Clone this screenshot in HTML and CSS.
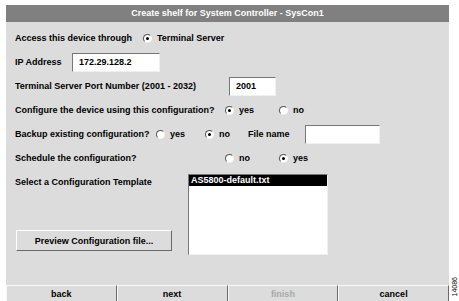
FILE: index.html
```html
<!DOCTYPE html>
<html>
<head>
  <title>Create shelf</title>
  <link rel="stylesheet" href="styles.css">
</head>
<body>
  <div class="page">
    <div class="panel">
      <div class="title">Create shelf for System Controller - SysCon1</div>

      <div class="form">
        <div class="row">
          <span class="label w-access">Access this device through</span>
          <span class="opt"><span class="radio on"></span>Terminal Server</span>
        </div>

        <div class="row">
          <span class="label w-ip">IP Address</span>
          <span class="field w-ipbox">172.29.128.2</span>
        </div>

        <div class="row">
          <span class="label w-port">Terminal Server Port Number (2001 - 2032)</span>
          <span class="field w-portbox">2001</span>
        </div>

        <div class="row">
          <span class="label w-long">Configure the device using this configuration?</span>
          <span class="opt w-yes"><span class="radio on"></span>yes</span>
          <span class="opt"><span class="radio"></span>no</span>
        </div>

        <div class="row">
          <span class="label w-backup">Backup existing configuration?</span>
          <span class="opt w-byes"><span class="radio"></span>yes</span>
          <span class="opt w-bno"><span class="radio on"></span>no</span>
          <span class="label w-fname">File name</span>
          <span class="field w-fbox"></span>
        </div>

        <div class="row">
          <span class="label w-long">Schedule the configuration?</span>
          <span class="opt w-yes"><span class="radio"></span>no</span>
          <span class="opt"><span class="radio on"></span>yes</span>
        </div>

        <div class="template">
          <div class="template-left">
            <span class="label">Select a Configuration Template</span>
            <button class="preview">Preview Configuration file...</button>
          </div>
          <div class="listbox">
            <div class="item selected">AS5800-default.txt</div>
          </div>
        </div>
      </div>

      <div class="footer">
        <button class="nav">back</button>
        <button class="nav">next</button>
        <button class="nav disabled">finish</button>
        <button class="nav">cancel</button>
      </div>
    </div>
    <div class="side">
      <span class="figno">14086</span>
    </div>
  </div>
</body>
</html>
```

FILE: styles.css
```css
/* page frame */
html, body {
  margin: 0;
  padding: 0;
  background-color: #fff;
  overflow: hidden;
}

.page {
  display: flex;
  height: 301px;
  padding: 5px 0 0 6px;
  box-sizing: border-box;
  font-family: "Liberation Sans", Arial, sans-serif;
  font-weight: bold;
  font-size: 9px;
  color: #000;
}

.panel {
  width: 443px;
  display: flex;
  flex-direction: column;
  background-color: #dcdcdc;
}

.title {
  height: 17px;
  line-height: 17px;
  background-color: #808080;
  color: #fff;
  font-size: 9px;
  text-align: center;
}

/* form rows */
.form {
  padding: 4px 0 0 9px;
}

.row {
  display: flex;
  align-items: center;
  height: 24px;
}

.label {
  flex-shrink: 0;
  white-space: nowrap;
}

.w-access { width: 128px; }
.w-ip { width: 57px; }
.w-port { width: 214px; }
.w-long { width: 210px; }
.w-backup { width: 141px; }
.w-fname { width: 57px; }

.opt {
  display: inline-flex;
  align-items: center;
  gap: 5px;
  flex-shrink: 0;
}

.w-yes { width: 54px; }
.w-byes { width: 49px; }
.w-bno { width: 43px; }

.radio {
  width: 7px;
  height: 7px;
  border-radius: 50%;
  border: 1px solid;
  border-color: #555 #f4f4f4 #f4f4f4 #555;
  background-color: #fff;
  position: relative;
}

.radio.on::after {
  content: "";
  position: absolute;
  left: 2px;
  top: 2px;
  width: 3px;
  height: 3px;
  background-color: #000;
  border-radius: 50%;
}

/* text fields */
.field {
  display: block;
  height: 19px;
  line-height: 17px;
  box-sizing: border-box;
  background-color: #fff;
  border: 1px solid;
  border-color: #777 #f0f0f0 #f0f0f0 #777;
  padding-left: 6px;
  font-weight: bold;
}

.w-ipbox { width: 88px; }
.w-portbox { width: 47px; }
.w-fbox { width: 75px; }

/* template chooser */
.template {
  display: flex;
}

.template-left {
  width: 173px;
  display: flex;
  flex-direction: column;
  align-items: flex-start;
}

.template-left .label {
  line-height: 24px;
}

.preview {
  margin: 36px 0 0 1px;
  width: 156px;
  height: 21px;
  background-color: #dcdcdc;
  border: 1px solid;
  border-color: #fff #6a6a6a #6a6a6a #fff;
  font-family: inherit;
  font-weight: bold;
  font-size: 9px;
  color: #000;
  padding: 0;
}

.listbox {
  margin-top: 4px;
  width: 140px;
  height: 81px;
  box-sizing: border-box;
  background-color: #fff;
  border: 1px solid;
  border-color: #777 #f0f0f0 #f0f0f0 #777;
}

.item {
  height: 11px;
  line-height: 11px;
  padding-left: 2px;
}

.item.selected {
  background-color: #000;
  color: #fff;
}

/* bottom navigation */
.footer {
  margin-top: auto;
  display: flex;
  height: 16px;
}

.nav {
  flex: 1;
  height: 16px;
  background-color: #dcdcdc;
  border: none;
  border-top: 1px solid #f8f8f8;
  border-left: 1px solid #f8f8f8;
  border-right: 1px solid #6a6a6a;
  font-family: inherit;
  font-weight: bold;
  font-size: 9px;
  color: #000;
  padding: 0;
}

.nav.disabled {
  color: #a8a8a8;
}

/* figure number */
.side {
  width: 10px;
  display: flex;
  align-items: flex-end;
  justify-content: center;
  padding-bottom: 5px;
  box-sizing: border-box;
}

.figno {
  writing-mode: vertical-rl;
  transform: rotate(180deg);
  font-size: 7px;
  font-weight: normal;
}
```
